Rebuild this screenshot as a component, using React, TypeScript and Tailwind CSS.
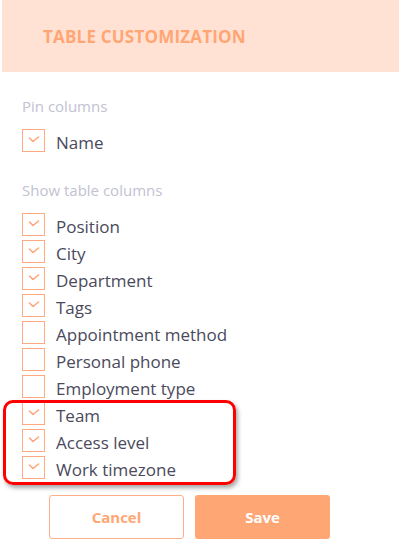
const pinned = [{ label: "Name", checked: true }];

const columns = [
  { label: "Position", checked: true },
  { label: "City", checked: true },
  { label: "Department", checked: true },
  { label: "Tags", checked: true },
  { label: "Appointment method", checked: false },
  { label: "Personal phone", checked: false },
  { label: "Employment type", checked: false },
  { label: "Team", checked: true },
  { label: "Access level", checked: true },
  { label: "Work timezone", checked: true },
];

function CheckRow({ label, checked }: { label: string; checked: boolean }) {
  return (
    <div className="flex h-[27px] items-center gap-[12px]">
      <span className="flex h-[23px] w-[23px] shrink-0 items-center justify-center border border-[#ffaa80] bg-white">
        {checked && (
          <svg width="12" height="8" viewBox="0 0 12 8" className="-mt-[2px]">
            <polyline
              points="1.5,2 5,5.5 10.5,1"
              fill="none"
              stroke="#ffa47c"
              strokeWidth="1.6"
              strokeLinecap="round"
              strokeLinejoin="round"
            />
          </svg>
        )}
      </span>
      <span className="-ml-[1px] pt-[4px] text-[17px] leading-[24px] text-[#4a4a5c]">{label}</span>
    </div>
  );
}

export default function App() {
  return (
    <div className="relative h-[549px] w-[399px] overflow-hidden bg-white font-['Open_Sans',sans-serif]">
      <div className="ml-[2px] flex h-[72px] items-center bg-[#ffe2d4] pl-[41px] pt-[2px]">
        <h2 className="text-[17px] font-bold tracking-[0.2px] text-[#ffa674]">TABLE CUSTOMIZATION</h2>
      </div>

      <div className="pl-[22px]">
        <p className="mt-[24px] h-[20px] text-[15px] leading-[20px] text-[#c2c2d2]">Pin columns</p>
        <div className="mt-[11px]">
          {pinned.map((c) => (
            <CheckRow key={c.label} {...c} />
          ))}
        </div>

        <p className="mt-[26px] h-[20px] text-[15px] leading-[20px] text-[#c2c2d2]">Show table columns</p>
        <div className="mt-[11px]">
          {columns.map((c) => (
            <CheckRow key={c.label} {...c} />
          ))}
        </div>
      </div>

      <div className="mt-[14px] flex gap-[11px] pl-[49px]">
        <button className="h-[44px] w-[135px] rounded-[3px] border border-[#ffb08a] bg-white text-[15px] font-bold text-[#ffa674]">
          Cancel
        </button>
        <button className="h-[44px] w-[135px] rounded-[3px] bg-[#ffa675] text-[15px] font-bold text-white">
          Save
        </button>
      </div>

      {/* highlight annotation */}
      <div className="pointer-events-none absolute left-[3px] top-[400px] h-[85px] w-[233px] rounded-[10px] border-[3px] border-[#ff0000] shadow-[2px_3px_4px_rgba(0,0,0,0.35)]" />
    </div>
  );
}
